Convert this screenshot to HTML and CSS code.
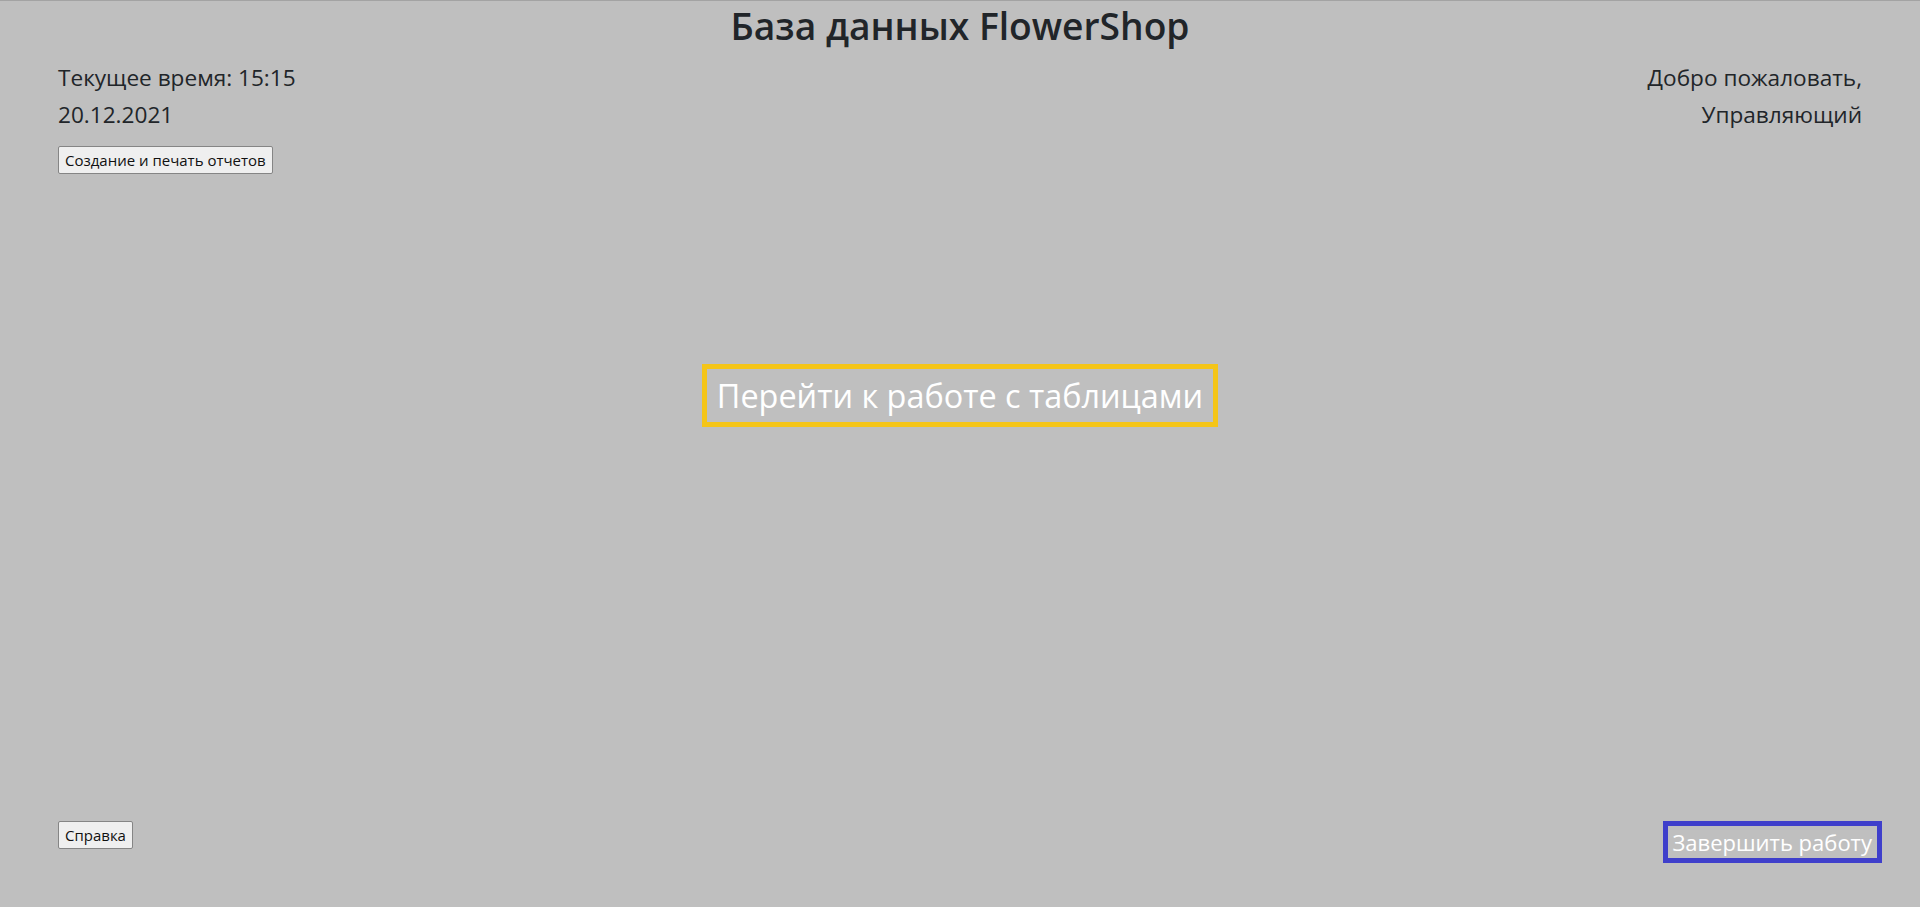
FILE: index.html
```html
<!DOCTYPE html>
<html lang="ru">
<head>
<meta charset="utf-8">
<title>FlowerShop</title>
<link rel="stylesheet" href="styles.css">
</head>
<body>
<div class="page">
  <h1 class="title">База данных FlowerShop</h1>
  <div class="info-row">
    <div class="info-left">
      <p class="info-text">Текущее время: 15:15<br>20.12.2021</p>
      <button class="btn-sys">Создание и печать отчетов</button>
    </div>
    <div class="info-right">
      <p class="info-text">Добро пожаловать,<br>Управляющий</p>
    </div>
  </div>
  <div class="center-area">
    <button class="btn-tables">Перейти к работе с таблицами</button>
  </div>
  <div class="bottom-row">
    <button class="btn-sys">Справка</button>
    <button class="btn-exit">Завершить работу</button>
  </div>
</div>
</body>
</html>
```

FILE: styles.css
```css
html, body {
  margin: 0;
  padding: 0;
}
body {
  background: #bfbfbf;
  font-family: "Open Sans", "Noto Sans", sans-serif;
  color: #212529;
}
.page {
  box-sizing: border-box;
  height: 907px;
  border-top: 1px solid #a3a3a3;
  display: flex;
  flex-direction: column;
}
.title {
  margin: 0;
  padding-top: 2px;
  text-align: center;
  font-size: 37.2px;
  font-weight: 600;
  line-height: 46px;
  color: #212529;
}
.info-row {
  display: flex;
  justify-content: space-between;
  padding: 10px 58px 0 58px;
}
.info-text {
  margin: 0 0 13px 0;
  font-size: 22.6px;
  line-height: 37px;
}
.info-right .info-text {
  text-align: right;
}
.btn-sys {
  font-family: "Open Sans", "Noto Sans", sans-serif;
  font-size: 15px;
  line-height: 22px;
  padding: 2px 6px;
  background: #efefef;
  color: #111;
  border: 1px solid #858585;
  border-radius: 2px;
  margin: 0;
}
.center-area {
  display: flex;
  justify-content: center;
  padding-top: 190px;
}
.btn-tables {
  font-family: "Open Sans", "Noto Sans", sans-serif;
  font-size: 32.4px;
  line-height: 48px;
  padding: 2px 10px 3px;
  background: transparent;
  color: #ffffff;
  border: 5px solid #f5c518;
  margin: 0;
}
.bottom-row {
  margin-top: auto;
  margin-bottom: 44px;
  display: flex;
  justify-content: space-between;
  align-items: flex-start;
  padding: 0 38px 0 58px;
}
.btn-exit {
  font-family: "Open Sans", "Noto Sans", sans-serif;
  font-size: 22px;
  line-height: 30px;
  padding: 1px 5px;
  background: transparent;
  color: #ffffff;
  border: 5px solid #3f3fcb;
  margin: 0;
}
```
